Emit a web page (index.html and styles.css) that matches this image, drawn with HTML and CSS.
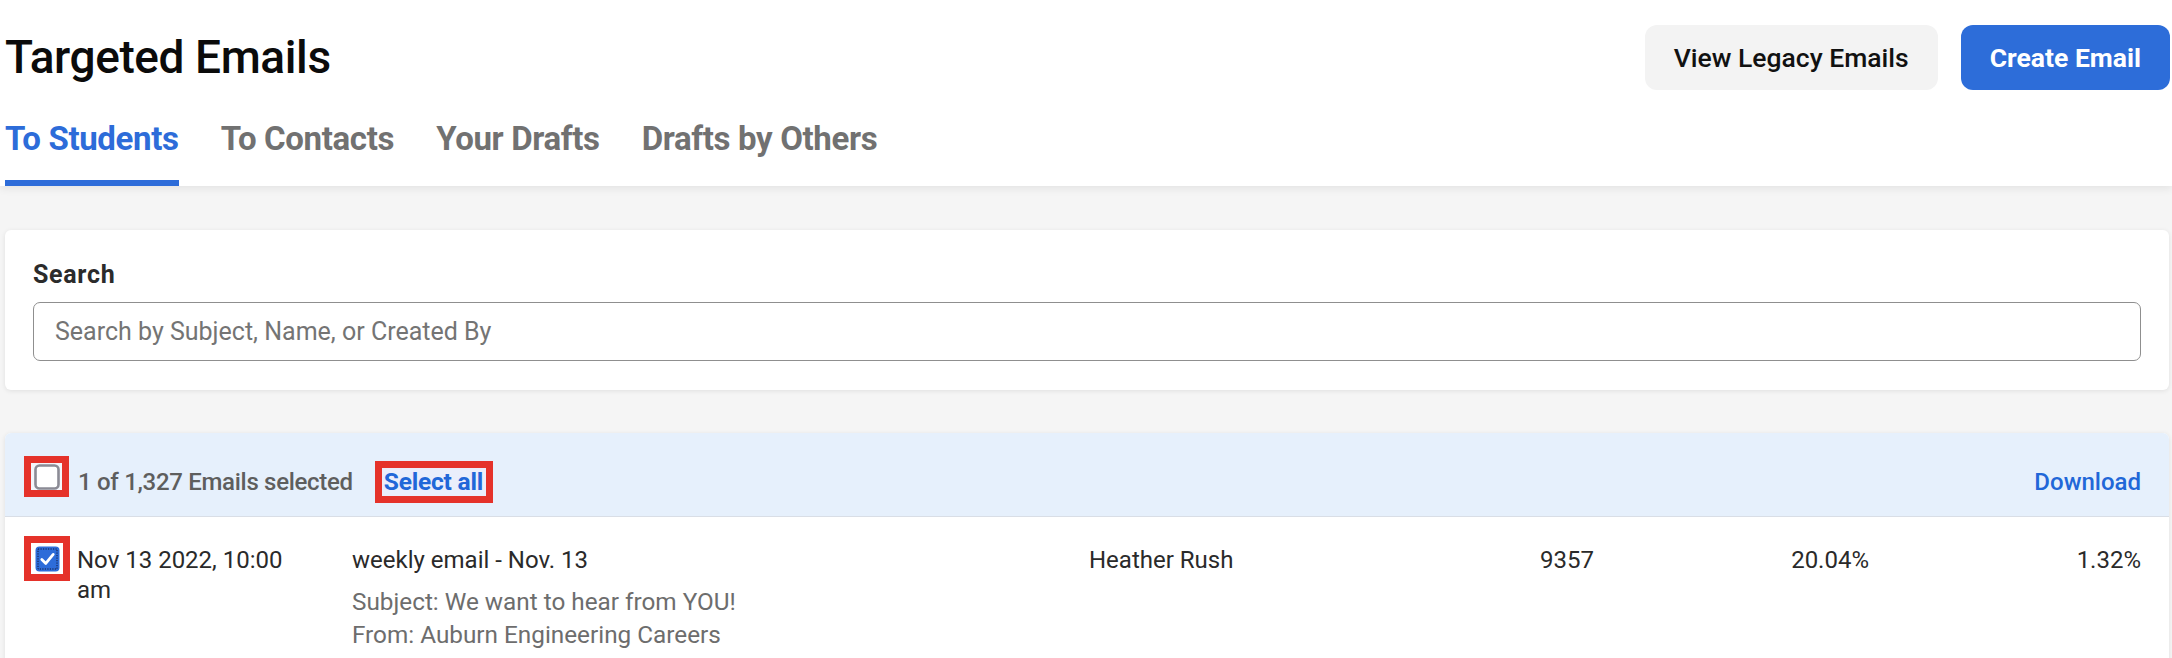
FILE: index.html
```html
<!DOCTYPE html>
<html lang="en">
<head>
<meta charset="utf-8">
<title>Targeted Emails</title>
<link rel="stylesheet" href="styles.css">
</head>
<body>
<header class="header">
  <div class="topbar">
    <h1 class="title">Targeted Emails</h1>
    <div class="actions">
      <button class="btn btn-light" type="button">View Legacy Emails</button>
      <button class="btn btn-primary" type="button">Create Email</button>
    </div>
  </div>
  <nav class="tabs">
    <a class="tab active" href="#">To Students</a>
    <a class="tab" href="#">To Contacts</a>
    <a class="tab" href="#">Your Drafts</a>
    <a class="tab" href="#">Drafts by Others</a>
  </nav>
</header>
<main class="content">
  <section class="card search-card">
    <label class="search-label" for="q">Search</label>
    <input class="search-input" id="q" type="text" placeholder="Search by Subject, Name, or Created By">
  </section>
  <section class="card table-card">
    <div class="select-bar">
      <span class="mark mark-head">
        <svg class="cb" viewBox="0 0 26 26" width="26" height="26"><rect x="1.5" y="1.5" width="23" height="23" rx="4" fill="#ffffff" stroke="#8b8b95" stroke-width="2.6"/></svg>
      </span>
      <span class="count">1 of 1,327 Emails selected</span>
      <span class="mark mark-link"><a class="select-all" href="#">Select all</a></span>
      <a class="download" href="#">Download</a>
    </div>
    <div class="row">
      <div class="cell-check">
        <span class="mark mark-row">
          <svg class="cb" viewBox="0 0 25 26" width="25" height="26"><rect x="0.5" y="0.5" width="24" height="25" rx="4" fill="#2d6cd9"/><rect x="3" y="3" width="19" height="20" fill="none" stroke="#14183a" stroke-width="1" stroke-dasharray="1.2 1.3"/><path d="M6.8 13.4 L10.8 17.4 L18.2 8.4" fill="none" stroke="#ffffff" stroke-width="2.8" stroke-linecap="round" stroke-linejoin="round"/></svg>
        </span>
      </div>
      <div class="cell date">Nov 13 2022, 10:00 am</div>
      <div class="cell">
        <div class="name">weekly email - Nov. 13</div>
        <div class="meta">Subject: We want to hear from YOU!</div>
        <div class="meta">From: Auburn Engineering Careers</div>
      </div>
      <div class="cell">Heather Rush</div>
      <div class="cell num">9357</div>
      <div class="cell num">20.04%</div>
      <div class="cell num">1.32%</div>
    </div>
  </section>
</main>
</body>
</html>
```
FILE: styles.css
```css
html, body {
  margin: 0;
  padding: 0;
}
body {
  background: #f5f5f5;
  font-family: Roboto, "Liberation Sans", Arial, sans-serif;
  color: #2a2a2a;
  overflow: hidden;
}

.header {
  background: #ffffff;
  padding: 25px 2px 0 5px;
  box-shadow: 0 3px 8px rgba(0, 0, 0, 0.07);
}
.topbar {
  display: flex;
  justify-content: space-between;
  align-items: center;
  height: 65px;
}
.title {
  margin: 0;
  font-size: 46px;
  font-weight: 500;
  line-height: 65px;
  color: #0b0b0b;
  letter-spacing: -0.4px;
}
.actions {
  display: flex;
  gap: 23px;
}
.btn {
  height: 65px;
  padding: 0 29px;
  border: 0;
  border-radius: 12px;
  font-family: Roboto, "Liberation Sans", Arial, sans-serif;
  font-size: 26.5px;
  font-weight: 500;
  cursor: pointer;
}
.btn-light {
  background: #f3f3f3;
  color: #111111;
}
.btn-primary {
  background: #2d6dd9;
  color: #ffffff;
  font-weight: 700;
}

.tabs {
  display: flex;
  gap: 42px;
  margin-top: 29px;
}
.tab {
  font-size: 33px;
  font-weight: 700;
  line-height: 40px;
  color: #717171;
  text-decoration: none;
  padding-bottom: 21px;
  border-bottom: 6px solid transparent;
  letter-spacing: -0.35px;
}
.tab.active {
  color: #2d6cd9;
  border-bottom-color: #2d6cd9;
}

.content {
  padding: 44px 3px 0 5px;
}
.card {
  background: #ffffff;
  border-radius: 6px;
  box-shadow: 0 1px 5px rgba(0, 0, 0, 0.09);
}
.search-card {
  padding: 29px 28px;
}
.search-label {
  display: block;
  font-size: 25px;
  font-weight: 700;
  line-height: 32px;
  color: #2b2b2b;
  margin-bottom: 11px;
  letter-spacing: 0.7px;
}
.search-input {
  display: block;
  width: 100%;
  box-sizing: border-box;
  height: 59px;
  border: 1.5px solid #8f8f8f;
  border-radius: 7px;
  padding: 0 21px;
  font-family: Roboto, "Liberation Sans", Arial, sans-serif;
  font-size: 25px;
  color: #333333;
  background: #ffffff;
}
.search-input::placeholder {
  color: #747474;
}

.table-card {
  margin-top: 43px;
  overflow: hidden;
}
.select-bar {
  display: flex;
  align-items: flex-start;
  box-sizing: border-box;
  height: 84px;
  background: #e6f0fc;
  border-bottom: 1px solid #d9dee6;
  padding: 23px 28px 0 19px;
}
.mark {
  display: flex;
  align-items: center;
  justify-content: center;
  box-sizing: border-box;
  border: 7px solid #e5322a;
}
.mark-head {
  width: 45px;
  height: 41px;
  background: #f4f6fb;
}
.mark-row {
  width: 46px;
  height: 45px;
  background: #ffffff;
}
.cb {
  display: block;
}
.count {
  margin: 10px 0 0 9px;
  font-size: 24px;
  font-weight: 500;
  line-height: 32px;
  color: #5e5e5e;
  letter-spacing: -0.3px;
}
.mark-link {
  margin: 5px 0 0 22px;
  height: 42px;
  padding: 0 3px 0 2px;
  background: #eaeefb;
}
.select-all {
  font-size: 24.5px;
  font-weight: 700;
  line-height: 28px;
  color: #2167d8;
  text-decoration: none;
  letter-spacing: -0.2px;
}
.download {
  margin: 10px 0 0 auto;
  font-size: 24px;
  font-weight: 500;
  line-height: 32px;
  color: #2167d8;
  text-decoration: none;
}

.row {
  display: grid;
  grid-template-columns: 53px 275px 737px 233px 272px 275px 272px;
  align-items: start;
  padding: 19px 28px 20px 19px;
  font-size: 24px;
  color: #2a2a2a;
}
.cell {
  padding-top: 9px;
  line-height: 30px;
}
.date {
  max-width: 225px;
}
.name {
  line-height: 30px;
  margin-bottom: 10px;
}
.meta {
  font-size: 24.3px;
  line-height: 33px;
  color: #6d6d6d;
}
.num {
  text-align: right;
}
```
